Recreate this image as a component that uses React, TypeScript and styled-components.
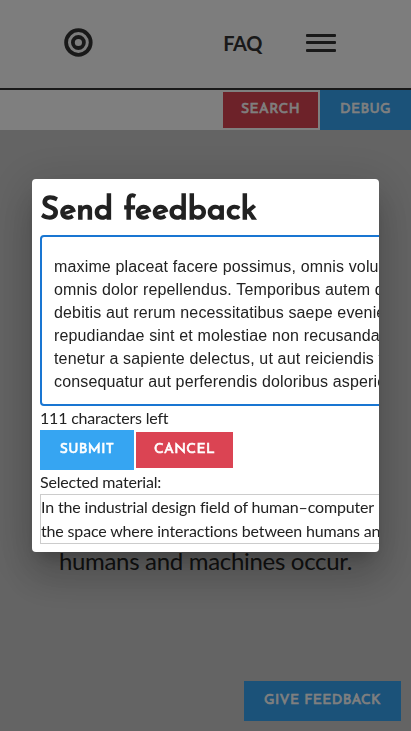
import React from "react";
import styled, { createGlobalStyle } from "styled-components";

const display = '"Josefin Sans", Lato, sans-serif';

const GlobalStyle = createGlobalStyle`
  * { box-sizing: border-box; }
  html, body { margin: 0; padding: 0; height: 100%; overflow: hidden; }
  body { background: #c8c8c8; color: #222; font-family: Lato, sans-serif; font-size: 16px; line-height: 24px; }
`;

const Page = styled.div`
  height: 731px;
  display: flex;
  flex-direction: column;
`;

const Header = styled.header`
  height: 90px;
  flex: none;
  display: flex;
  align-items: center;
  padding: 0 75px 3px 64px;
  background: #fafafa;
  border-bottom: 2px solid #333;
`;

const FaqLink = styled.span`
  margin-left: auto;
  margin-right: 44px;
  padding-top: 1px;
  font-size: 20px;
  font-weight: 700;
  letter-spacing: -0.3px;
  color: #333;
`;

const Toolbar = styled.div`
  height: 40px;
  flex: none;
  display: flex;
  justify-content: flex-end;
  align-items: center;
  gap: 2px;
  background: #fff;
`;

const Button = styled.button<{ $tone: "blue" | "red"; $width: number }>`
  width: ${(p) => p.$width}px;
  height: ${(p) => (p.$tone === "blue" ? 40 : 36)}px;
  border: 0;
  padding: 0 0 1px;
  background: ${(p) => (p.$tone === "blue" ? "#36a5f2" : "#db4453")};
  color: #fff;
  font-family: ${display};
  font-size: 14px;
  font-weight: 400;
  -webkit-text-stroke: 0.6px currentColor;
  letter-spacing: 0.35px;
  white-space: nowrap;
`;

const Content = styled.main`
  flex: 1;
  display: flex;
  flex-direction: column;
  justify-content: space-between;
  padding: 288px 10px 10px;
`;

const Article = styled.p`
  margin: 0;
  height: 160px;
  padding: 125px 0 0;
  font-size: 24px;
  line-height: 36px;
  letter-spacing: -0.31px;
  text-align: center;
  white-space: nowrap;
`;

const Floating = styled.div`
  display: flex;
  justify-content: flex-end;
`;

const Backdrop = styled.div`
  position: fixed;
  inset: 0;
  display: flex;
  align-items: center;
  justify-content: center;
  background: rgba(0, 0, 0, 0.5);
`;

const Dialog = styled.section`
  width: 347px;
  height: 373px;
  padding: 8px 0 8px 8px;
  overflow: hidden;
  background: #fff;
  border-radius: 4px;
  letter-spacing: -0.2px;
  box-shadow: 0 11px 15px -7px rgba(0, 0, 0, 0.2), 0 24px 38px 3px rgba(0, 0, 0, 0.14),
    0 9px 46px 8px rgba(0, 0, 0, 0.12);
`;

const Title = styled.h1`
  margin: 0;
  height: 48px;
  padding-left: 0.6px;
  font-family: ${display};
  font-size: 32px;
  font-weight: 400;
  -webkit-text-stroke: 1.5px currentColor;
  line-height: 48px;
  letter-spacing: 0.17px;
`;

const Field = styled.div`
  width: 480px;
  height: 171px;
  padding: 18px 12px 0;
  border: 2px solid #1976d2;
  border-radius: 4px;
  font-family: "Liberation Sans", Arial, sans-serif;
  line-height: 23px;
  letter-spacing: 0.15px;
  white-space: nowrap;
`;

const Line = styled.div``;

const Actions = styled.div`
  display: flex;
  align-items: center;
  gap: 2px;
`;

const Material = styled.div`
  width: 480px;
  height: 50px;
  border: 1px solid #ccc;
  letter-spacing: -0.16px;
  white-space: nowrap;
`;

const TargetIcon = () => (
  <svg width="29" height="29" viewBox="0 0 29 29" fill="none" stroke="#333" strokeWidth="3.8">
    <circle cx="14.4" cy="14.5" r="12.3" />
    <circle cx="14.4" cy="14.5" r="5.5" />
  </svg>
);

const MenuIcon = () => (
  <svg width="30" height="18" viewBox="0 0 30 18" fill="#333">
    <rect width="30" height="3" rx="1" />
    <rect y="7" width="30" height="3" rx="1" />
    <rect y="15" width="30" height="3" rx="1" />
  </svg>
);

const feedback = [
  "maxime placeat facere possimus, omnis voluptas",
  "omnis dolor repellendus. Temporibus autem quibusdam",
  "debitis aut rerum necessitatibus saepe eveniet ut",
  "repudiandae sint et molestiae non recusandae.",
  "tenetur a sapiente delectus, ut aut reiciendis voluptatibus",
  "consequatur aut perferendis doloribus asperiores",
];

export default function App() {
  return (
    <>
      <GlobalStyle />
      <Page>
        <Header>
          <TargetIcon />
          <FaqLink>FAQ</FaqLink>
          <MenuIcon />
        </Header>
        <Toolbar>
          <Button $tone="red" $width={95}>SEARCH</Button>
          <Button $tone="blue" $width={91}>DEBUG</Button>
        </Toolbar>
        <Content>
          <Article>humans and machines occur.</Article>
          <Floating>
            <Button $tone="blue" $width={157}>GIVE FEEDBACK</Button>
          </Floating>
        </Content>
      </Page>
      <Backdrop>
        <Dialog>
          <Title>Send feedback</Title>
          <Field>
            {feedback.map((line) => (
              <Line key={line}>{line}</Line>
            ))}
          </Field>
          <Line>111 characters left</Line>
          <Actions>
            <Button $tone="blue" $width={94}>SUBMIT</Button>
            <Button $tone="red" $width={97}>CANCEL</Button>
          </Actions>
          <Line>Selected material:</Line>
          <Material>
            <Line>In the industrial design field of human–computer</Line>
            <Line>the space where interactions between humans and</Line>
          </Material>
        </Dialog>
      </Backdrop>
    </>
  );
}
